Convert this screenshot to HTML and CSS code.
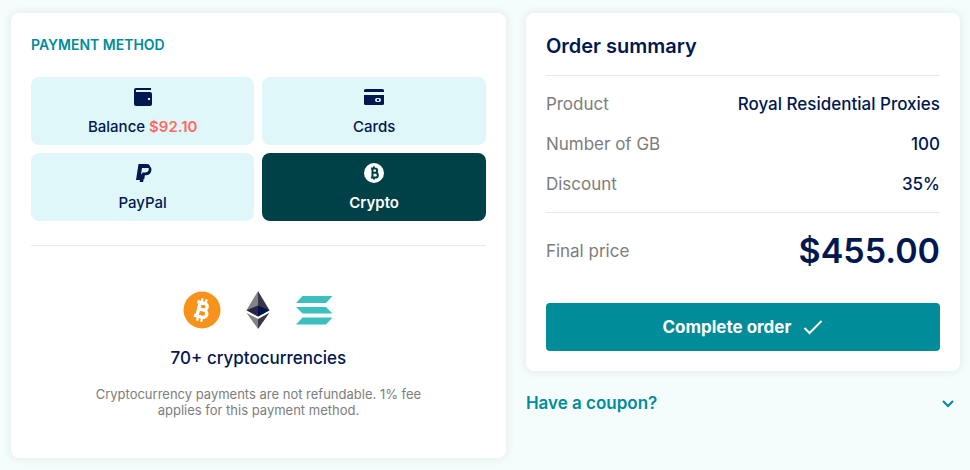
FILE: index.html
```
<!DOCTYPE html>
<html lang="en">
<head>
  <meta charset="UTF-8">
  <meta name="viewport" content="width=device-width, initial-scale=1.0">
  <title>Checkout</title>
  <link rel="stylesheet" href="styles.css">
</head>
<body>
  <main class="checkout">
    <section class="card">
      <h2 class="section-title">PAYMENT METHOD</h2>

      <div class="methods" role="radiogroup" aria-label="Payment method">
        <label class="method">
          <input type="radio" name="method" value="balance">
          <svg class="method-icon" viewBox="0 0 20 20" aria-hidden="true">
            <path fill="currentColor" fill-rule="evenodd" d="M3 1h15v2H3v2H17a2 2 0 0 1 2 2v10a2 2 0 0 1-2 2H3a2 2 0 0 1-2-2V3a2 2 0 0 1 2-2zM15 11v2h2v-2z"/>
          </svg>
          <span>Balance <span class="amount">$92.10</span></span>
        </label>
        <label class="method">
          <input type="radio" name="method" value="cards">
          <svg class="method-icon" viewBox="0 0 20 20" aria-hidden="true">
            <path fill="currentColor" d="M1.500 2h17A1.500 1.500 0 0 1 20 3.500V5H0V3.500A1.500 1.500 0 0 1 1.500 2zM0 8h20v8.500a1.500 1.500 0 0 1-1.500 1.500h-17A1.500 1.500 0 0 1 0 16.500z"/>
            <rect x="11" y="11" width="6" height="4" rx="2" fill="#e0f7fa"/>
            <rect x="13" y="12" width="2" height="2" fill="currentColor"/>
          </svg>
          <span>Cards</span>
        </label>
        <label class="method">
          <input type="radio" name="method" value="paypal">
          <svg class="method-icon" viewBox="0 0 20 20" aria-hidden="true">
            <path fill="currentColor" fill-rule="evenodd" d="M5.500 1h8.300c2 0 3.200 1.100 3.400 2.800 1 .9 1.400 2 1.200 3.400-.4 3.200-2.500 5-5.500 5h-1l-.6 3.800h-.7L10.200 19H6.700l.3-2H3zM9 5L8 11.500l1.800-2h2.200c2 0 3.500-1.200 3.800-3.300l.1-.8c-.5-.4-1.200-.4-2.100-.4z"/>
          </svg>
          <span>PayPal</span>
        </label>
        <label class="method">
          <input type="radio" name="method" value="crypto" checked>
          <svg class="method-icon" viewBox="0 0 20 20" aria-hidden="true">
            <circle cx="10" cy="10" r="10" fill="currentColor"/>
            <path fill="none" stroke="#004147" stroke-width="2" d="M7 5.500h4a2 2 0 0 1 0 4.300H8.500h3a2.300 2.300 0 0 1 0 4.700H7M8.500 5.500v9M10 3.500v2M10 14.500v2"/>
          </svg>
          <span>Crypto</span>
        </label>
      </div>

      <div class="crypto">
        <div class="coins">
          <svg class="coin" viewBox="0 0 38 38" aria-label="Bitcoin">
            <circle cx="19" cy="19" r="18.500" fill="#f7931a"/>
            <g transform="rotate(14 19 19)" fill="none" stroke="#fff">
              <path stroke-width="3.400" d="M12.500 12h7.500a3.300 3.300 0 0 1 0 6.600h-4h5a3.700 3.700 0 0 1 0 7.400h-8.500M15.500 12v14"/>
              <path stroke-width="2.200" d="M16.800 7.500v4M21 7.500v4M16.800 26.500v4M21 26.500v4"/>
            </g>
          </svg>
          <svg class="coin" viewBox="0 0 38 38" aria-label="Ethereum">
            <path fill="#828384" d="M19 0v25.500L7.500 19.300z"/>
            <path fill="#3c3548" d="M19 0v25.500l11.500-6.200z"/>
            <path fill="#2b2444" d="M19 14.500v11L7.500 19.300z"/>
            <path fill="#02144f" d="M19 14.500v11l11.500-6.200z"/>
            <path fill="#828384" d="M19 28v10L7.500 21.800z"/>
            <path fill="#3c3548" d="M19 28v10l11.500-16.200z"/>
          </svg>
          <svg class="coin" viewBox="0 0 38 38" aria-label="Solana">
            <g fill="#3cbfbf">
              <path d="M7.500 5H37.500L31 12H1z"/>
              <path d="M1 16h30l6.500 6.500h-30z"/>
              <path d="M7.500 26.500h30L31 33.500H1z"/>
            </g>
          </svg>
        </div>
        <h3 class="crypto-title">70+ cryptocurrencies</h3>
        <p class="note">Cryptocurrency payments are not refundable. 1% fee applies for this payment method.</p>
      </div>
    </section>

    <aside class="sidebar">
      <section class="card">
        <h2 class="summary-title">Order summary</h2>
        <dl class="details">
          <div class="row">
            <dt>Product</dt>
            <dd>Royal Residential Proxies</dd>
          </div>
          <div class="row">
            <dt>Number of GB</dt>
            <dd>100</dd>
          </div>
          <div class="row">
            <dt>Discount</dt>
            <dd>35%</dd>
          </div>
        </dl>
        <dl class="total row">
          <dt>Final price</dt>
          <dd class="price">$455.00</dd>
        </dl>
        <button class="submit" type="submit">
          Complete order
          <svg class="check" viewBox="0 0 20 20" aria-hidden="true">
            <path d="M1.500 11l5 5L18.500 4" fill="none" stroke="currentColor" stroke-width="2"/>
          </svg>
        </button>
      </section>

      <button class="coupon" type="button" aria-expanded="false">
        Have a coupon?
        <svg class="chevron" viewBox="0 0 12 12" aria-hidden="true">
          <path d="M1 4l5 5 5-5" fill="none" stroke="currentColor" stroke-width="2"/>
        </svg>
      </button>
    </aside>
  </main>
</body>
</html>
```

FILE: styles.css
```
* {
  margin: 0;
  padding: 0;
  box-sizing: border-box;
}

body {
  background: #f5fcfc;
  color: #00174f;
  font-family: Inter, sans-serif;
  font-size: 17px;
  line-height: 24px;
}

button {
  border: none;
  font-family: inherit;
  font-size: 17px;
  line-height: 24px;
  cursor: pointer;
}

.checkout {
  display: grid;
  grid-template-columns: minmax(0, 57fr) minmax(0, 50fr);
  gap: 20px;
  align-items: start;
  padding: 13px 10px 12px 11px;
}

.card {
  background: #fff;
  border-radius: 8px;
  padding: 20px;
  box-shadow: 0 0 10px rgba(0, 40, 50, 0.1);
}

.section-title {
  color: #008c99;
  font-size: 14px;
  font-weight: 600;
  margin-bottom: 20px;
}

/* Payment methods */
.methods {
  display: grid;
  grid-template-columns: 1fr 1fr;
  gap: 8px;
  padding-bottom: 24px;
  border-bottom: 1px solid #e8eaea;
}

.method {
  display: flex;
  flex-direction: column;
  align-items: center;
  gap: 10px;
  position: relative;
  padding: 10px 8px 8px;
  border-radius: 8px;
  background: #e0f7fa;
  font-size: 15px;
  font-weight: 500;
  line-height: 20px;
  cursor: pointer;
}

.method input {
  position: absolute;
  inset: 0;
  opacity: 0;
  cursor: pointer;
}

.method:has(input:checked) {
  background: #004147;
  color: #fff;
  font-weight: 600;
}

.method-icon {
  width: 20px;
  height: 20px;
}

.amount {
  color: #ff6b61;
  font-weight: 600;
}

/* Crypto info */
.crypto {
  display: flex;
  flex-direction: column;
  align-items: center;
  padding: 45px 0 20px;
  text-align: center;
}

.coins {
  display: flex;
  gap: 18px;
  margin-bottom: 17px;
}

.coin {
  width: 38px;
  height: 38px;
}

.crypto-title {
  font-size: 17px;
  font-weight: 500;
  margin-bottom: 16px;
}

.note {
  max-width: 340px;
  color: #7d7d7d;
  font-size: 13px;
  line-height: 16px;
}

/* Order summary */
.summary-title {
  padding-bottom: 16px;
  border-bottom: 1px solid #e8eaea;
  font-size: 20px;
  font-weight: 600;
  line-height: 26px;
}

.details {
  display: grid;
  gap: 16px;
  padding: 16px 0;
  border-bottom: 1px solid #e8eaea;
}

.row {
  display: flex;
  justify-content: space-between;
  align-items: center;
}

.row dt {
  color: #7d7d7d;
}

.row dd {
  font-weight: 500;
}

.total {
  padding: 16px 0 30px;
}

.total .price {
  font-size: 34px;
  font-weight: 600;
  line-height: 44px;
}

.submit {
  display: flex;
  justify-content: center;
  align-items: center;
  gap: 12px;
  width: 100%;
  padding: 12px;
  border-radius: 4px;
  background: #008c99;
  color: #fff;
  font-weight: 700;
}

.check {
  width: 20px;
  height: 20px;
}

.coupon {
  display: flex;
  justify-content: space-between;
  align-items: center;
  width: 100%;
  margin-top: 20px;
  padding-right: 6px;
  background: none;
  color: #008c99;
  font-weight: 600;
}

.chevron {
  width: 12px;
  height: 12px;
}
```
